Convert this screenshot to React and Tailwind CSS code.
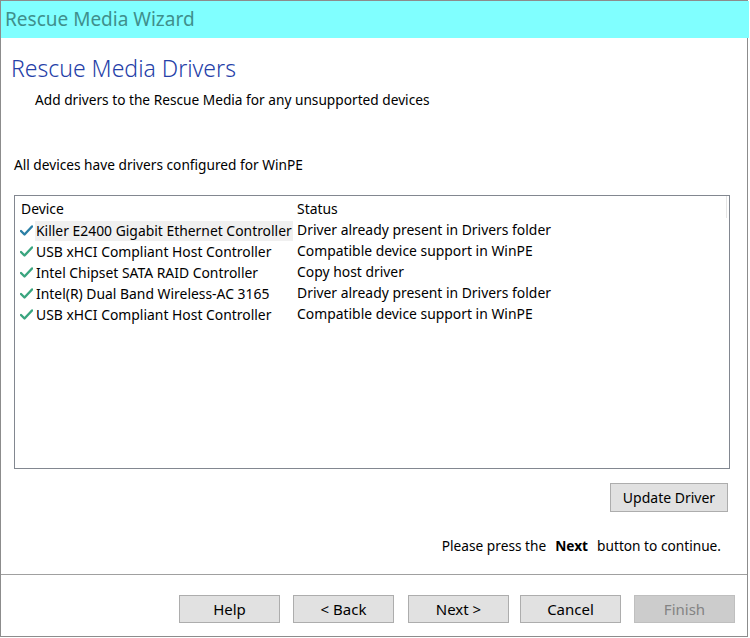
import React from 'react';

const devices = [
  { name: 'Killer E2400 Gigabit Ethernet Controller', status: 'Driver already present in Drivers folder', selected: true },
  { name: 'USB xHCI Compliant Host Controller', status: 'Compatible device support in WinPE' },
  { name: 'Intel Chipset SATA RAID Controller', status: 'Copy host driver' },
  { name: 'Intel(R) Dual Band Wireless-AC 3165', status: 'Driver already present in Drivers folder' },
  { name: 'USB xHCI Compliant Host Controller', status: 'Compatible device support in WinPE' },
];

const Check = ({ color }) => (
  <svg width="13" height="11" viewBox="0 0 13 11" className="shrink-0">
    <path d="M1 6 L4.5 9.5 L12 1.5" fill="none" stroke={color} strokeWidth="2.4" strokeLinecap="round" strokeLinejoin="round" />
  </svg>
);

const WinButton = ({ children, disabled, className = '' }) => (
  <button
    className={`h-[28px] w-[101px] border text-[15px] ${
      disabled ? 'bg-[#cccccc] border-[#bfbfbf] text-[#838383]' : 'bg-[#e1e1e1] border-[#adadad] text-black'
    } ${className}`}
  >
    {children}
  </button>
);

export default function App() {
  return (
    <div className="w-[750px] h-[638px] bg-white overflow-hidden" style={{ fontFamily: '"Noto Sans", "Open Sans", sans-serif' }}>
      <div className="w-[748px] h-[637px] border border-[#8c8c8c] flex flex-col">
        {/* Title bar */}
        <div className="h-[37px] bg-[#80ffff] flex items-center pl-[4px] text-[19px] text-[#3f8f8c] shrink-0 -mr-[2px]">
          Rescue Media Wizard
        </div>

        {/* Header */}
        <div className="pl-[10px] pt-[14px] text-[23px] leading-[32px] font-light text-[#2540a8]">
          Rescue Media Drivers
        </div>
        <div className="pl-[34px] pt-[6px] text-[13.7px] leading-[20px] text-black">
          Add drivers to the Rescue Media for any unsupported devices
        </div>

        <div className="pl-[13px] pt-[45px] text-[13.7px] leading-[20px] text-black">
          All devices have drivers configured for WinPE
        </div>

        {/* Device list */}
        <div className="ml-[13px] mt-[20px] w-[716px] h-[274px] border border-[#828790] bg-white text-[13.9px] text-black">
          <div className="flex h-[24px] items-start">
            <div className="w-[276px] pl-[6px] pt-[3px] leading-[20px]">Device</div>
            <div className="flex-1 pl-[6px] pt-[3px] leading-[20px]">Status</div>
            <div className="w-[1px] h-[22px] bg-[#e5e5e5] mr-[2px]" />
          </div>
          {devices.map((d, i) => (
            <div key={i} className="flex h-[21px] items-center">
              <div className="w-[276px] flex items-center pl-[5px]">
                <Check color={d.selected ? '#2b7fa5' : '#3aa57f'} />
                <span className={`ml-[2px] pl-[1px] pr-[1px] h-[20px] leading-[20px] whitespace-nowrap ${d.selected ? 'bg-[#f0f0f0]' : ''}`}>
                  {d.name}
                </span>
              </div>
              <div className="flex-1 pl-[6px] whitespace-nowrap">{d.status}</div>
            </div>
          ))}
        </div>

        {/* Update driver */}
        <div className="flex justify-end pr-[19px] mt-[14px]">
          <button className="h-[29px] w-[118px] border border-[#adadad] bg-[#e1e1e1] text-[14px] text-black">
            Update Driver
          </button>
        </div>

        <div className="flex justify-end pr-[26px] mt-[24px] text-[13.7px] leading-[20px] text-black">
          <span>Please press the</span>
          <span className="font-bold mx-[9px]">Next</span>
          <span>button to continue.</span>
        </div>

        {/* Separator */}
        <div className="mt-[18px] h-[1px] bg-[#a0a0a0]" />

        {/* Buttons */}
        <div className="flex pl-[178px] mt-[20px] text-[14px]">
          <WinButton>Help</WinButton>
          <WinButton className="ml-[13px]">&lt; Back</WinButton>
          <WinButton className="ml-[14px]">Next &gt;</WinButton>
          <WinButton className="ml-[11px]">Cancel</WinButton>
          <WinButton className="ml-[13px]" disabled>Finish</WinButton>
        </div>
      </div>
    </div>
  );
}
